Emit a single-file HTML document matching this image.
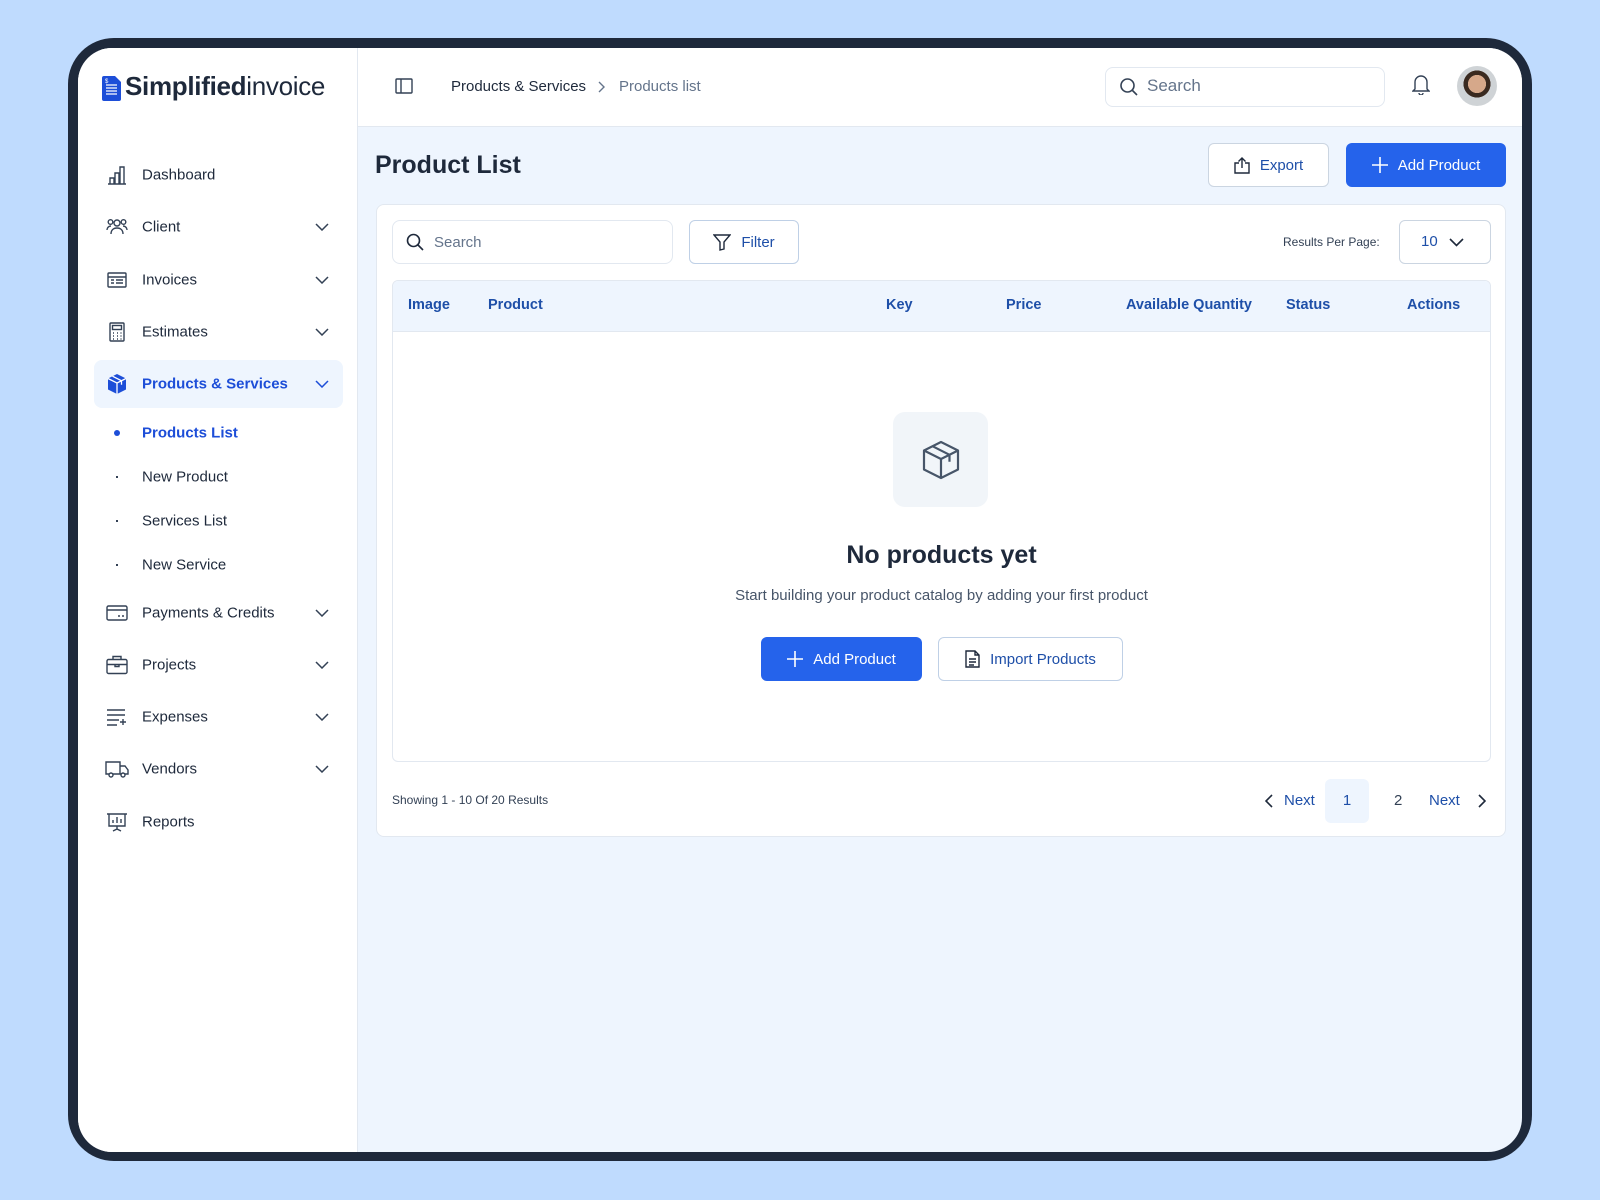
<!DOCTYPE html>
<html><head><meta charset="utf-8"><style>
*{box-sizing:border-box;margin:0;padding:0}
body{width:1600px;height:1200px;background:#bfdbfe;font-family:"Liberation Sans",sans-serif;position:relative;overflow:hidden;color:#1e293b}
.a{position:absolute}
.frame{left:68px;top:38px;width:1464px;height:1123px;background:#1e293b;border-radius:46px}
.inner{left:78px;top:48px;width:1444px;height:1104px;background:#eef5fe;border-radius:34px;overflow:hidden}
.side{left:0;top:0;width:280px;height:1104px;background:#fff;border-right:1px solid #e2e8f0}
.hdr{left:280px;top:0;width:1164px;height:79px;background:#fff;border-bottom:1px solid #e2e8f0}
.nav{position:absolute;left:64px;font-size:15px;color:#1e293b;transform:translateY(-50%)}
.ic{position:absolute;transform:translate(-50%,-50%)}
.chev{position:absolute;left:244px;transform:translate(-50%,-50%)}
.btn{position:absolute;border-radius:6px;display:flex;align-items:center;justify-content:center;gap:10px;font-size:15px}
.th{position:absolute;top:24px;font-size:14.5px;font-weight:bold;color:#1e4fa8;transform:translateY(-50%)}
</style></head><body>
<div class="a frame"></div>
<div class="a inner">
 <div class="a side">
  <svg class="a" style="left:24px;top:28px" width="19" height="25" viewBox="0 0 19 25"><path d="M2 0h11l6 6v17a2 2 0 0 1-2 2H2a2 2 0 0 1-2-2V2a2 2 0 0 1 2-2z" fill="#1d4ed8"/><path d="M4 9h11M4 12h11M4 15h11M4 18h11" stroke="#fff" stroke-width="1.3"/><text x="3" y="7" font-size="6" fill="#fff" font-family="Liberation Sans">$</text></svg>
  <div class="a" style="left:47px;top:23px;font-size:26px;color:#1e293b;letter-spacing:-0.3px"><b>Simplified</b>invoice</div>

  <svg class="ic" style="left:39px;top:127px" width="20" height="20" viewBox="0 0 20 20" fill="none" stroke="#334155" stroke-width="1.4"><path d="M1 19h18M3 19v-6h4v6M8 19V8h4v11M13 19V2h4v17"/></svg>
  <div class="nav" style="top:127px">Dashboard</div>

  <svg class="ic" style="left:39px;top:179px" width="22" height="20" viewBox="0 0 22 20" fill="none" stroke="#334155" stroke-width="1.4"><circle cx="11" cy="6" r="3"/><circle cx="4.5" cy="5" r="2.3"/><circle cx="17.5" cy="5" r="2.3"/><path d="M5 17c0-4 2.5-6 6-6s6 2 6 6M1 13c0-2 1.5-4 4-4M21 13c0-2-1.5-4-4-4"/></svg>
  <div class="nav" style="top:179px">Client</div>
  <svg class="chev" style="top:179px" width="14" height="8" viewBox="0 0 14 8" fill="none" stroke="#334155" stroke-width="1.5"><path d="M1 1l6 6 6-6"/></svg>

  <svg class="ic" style="left:39px;top:232px" width="20" height="16" viewBox="0 0 20 16" fill="none" stroke="#334155" stroke-width="1.4"><rect x="1" y="1" width="18" height="14" rx="1"/><path d="M1 5h18M4 8h3M9 8h7M4 11h3M9 11h7"/></svg>
  <div class="nav" style="top:232px">Invoices</div>
  <svg class="chev" style="top:232px" width="14" height="8" viewBox="0 0 14 8" fill="none" stroke="#334155" stroke-width="1.5"><path d="M1 1l6 6 6-6"/></svg>

  <svg class="ic" style="left:39px;top:284px" width="16" height="20" viewBox="0 0 16 20" fill="none" stroke="#334155" stroke-width="1.4"><rect x="1" y="1" width="14" height="18" rx="1"/><rect x="3.5" y="3.5" width="9" height="4"/><path d="M4 11h1M8 11h1M11.5 11h1M4 14h1M8 14h1M11.5 14h1M4 17h1M8 17h1M11.5 17h1"/></svg>
  <div class="nav" style="top:284px">Estimates</div>
  <svg class="chev" style="top:284px" width="14" height="8" viewBox="0 0 14 8" fill="none" stroke="#334155" stroke-width="1.5"><path d="M1 1l6 6 6-6"/></svg>

  <div class="a" style="left:16px;top:312px;width:249px;height:48px;background:#eef5fe;border-radius:8px"></div>
  <svg class="ic" style="left:39px;top:336px" width="22" height="22" viewBox="0 0 22 22"><path d="M11 1l9 4.5v11L11 21 2 16.5v-11z" fill="#1d4ed8"/><path d="M2 5.5L11 10l9-4.5M11 10v11M6.5 3.2l9 4.6v4" stroke="#fff" stroke-width="1.3" fill="none"/></svg>
  <div class="nav" style="top:336px;color:#1d4ed8;font-weight:bold">Products &amp; Services</div>
  <svg class="chev" style="top:336px" width="14" height="8" viewBox="0 0 14 8" fill="none" stroke="#1d4ed8" stroke-width="1.5"><path d="M1 1l6 6 6-6"/></svg>

  <div class="a" style="left:36px;top:382px;width:6px;height:6px;border-radius:50%;background:#1d4ed8"></div>
  <div class="nav" style="top:385px;color:#1d4ed8;font-weight:bold">Products List</div>
  <div class="a" style="left:38px;top:428px;width:2px;height:2px;background:#334155"></div>
  <div class="nav" style="top:429px">New Product</div>
  <div class="a" style="left:38px;top:472px;width:2px;height:2px;background:#334155"></div>
  <div class="nav" style="top:473px">Services List</div>
  <div class="a" style="left:38px;top:516px;width:2px;height:2px;background:#334155"></div>
  <div class="nav" style="top:517px">New Service</div>

  <svg class="ic" style="left:39px;top:565px" width="22" height="16" viewBox="0 0 22 16" fill="none" stroke="#334155" stroke-width="1.4"><rect x="1" y="1" width="20" height="14" rx="1.5"/><path d="M1 5h20M12 11h2M16 11h2"/></svg>
  <div class="nav" style="top:565px">Payments &amp; Credits</div>
  <svg class="chev" style="top:565px" width="14" height="8" viewBox="0 0 14 8" fill="none" stroke="#334155" stroke-width="1.5"><path d="M1 1l6 6 6-6"/></svg>

  <svg class="ic" style="left:39px;top:617px" width="22" height="19" viewBox="0 0 22 19" fill="none" stroke="#334155" stroke-width="1.4"><rect x="1" y="4" width="20" height="14" rx="1.5"/><path d="M7 4V1h8v3M1 9h20M9 9v2h4V9"/></svg>
  <div class="nav" style="top:617px">Projects</div>
  <svg class="chev" style="top:617px" width="14" height="8" viewBox="0 0 14 8" fill="none" stroke="#334155" stroke-width="1.5"><path d="M1 1l6 6 6-6"/></svg>

  <svg class="ic" style="left:39px;top:669px" width="22" height="18" viewBox="0 0 22 18" fill="none" stroke="#334155" stroke-width="1.4"><path d="M1 2h18M1 7h18M1 12h12M1 17h10M17 11v6M14 14h6"/></svg>
  <div class="nav" style="top:669px">Expenses</div>
  <svg class="chev" style="top:669px" width="14" height="8" viewBox="0 0 14 8" fill="none" stroke="#334155" stroke-width="1.5"><path d="M1 1l6 6 6-6"/></svg>

  <svg class="ic" style="left:39px;top:721px" width="24" height="18" viewBox="0 0 24 18" fill="none" stroke="#334155" stroke-width="1.4"><path d="M1 2h14v12H1zM15 6h5l3 4v4h-8"/><circle cx="6" cy="15" r="2" fill="#fff"/><circle cx="18" cy="15" r="2" fill="#fff"/></svg>
  <div class="nav" style="top:721px">Vendors</div>
  <svg class="chev" style="top:721px" width="14" height="8" viewBox="0 0 14 8" fill="none" stroke="#334155" stroke-width="1.5"><path d="M1 1l6 6 6-6"/></svg>

  <svg class="ic" style="left:39px;top:774px" width="22" height="20" viewBox="0 0 22 20" fill="none" stroke="#334155" stroke-width="1.4"><path d="M1 2h20M3 2v12h16V2M11 14v3M7 19l4-2 4 2M7 11V8M11 11V5M15 11V7"/></svg>
  <div class="nav" style="top:774px">Reports</div>
 </div>

 <div class="a hdr">
  <svg class="a" style="left:37px;top:30px" width="18" height="16" viewBox="0 0 18 16" fill="none" stroke="#334155" stroke-width="1.4"><rect x="1" y="1" width="16" height="14" rx="1"/><path d="M6 1v14"/></svg>
  <div class="a" style="left:93px;top:30px;font-size:15px;color:#1e293b">Products &amp; Services</div>
  <svg class="a" style="left:240px;top:33px" width="7" height="12" viewBox="0 0 7 12" fill="none" stroke="#64748b" stroke-width="1.4"><path d="M1 1l5 5-5 5"/></svg>
  <div class="a" style="left:261px;top:30px;font-size:15px;color:#64748b">Products list</div>
  <div class="a" style="left:747px;top:19px;width:280px;height:40px;border:1px solid #e2e8f0;border-radius:8px"></div>
  <svg class="a" style="left:761px;top:29px" width="20" height="20" viewBox="0 0 20 20" fill="none" stroke="#334155" stroke-width="1.6"><circle cx="8.5" cy="8.5" r="6.5"/><path d="M13.5 13.5L18 18"/></svg>
  <div class="a" style="left:789px;top:28px;font-size:17px;color:#64748b">Search</div>
  <svg class="a" style="left:1054px;top:26px" width="18" height="21" viewBox="0 0 18 21" fill="none" stroke="#334155" stroke-width="1.4"><path d="M3 15V8a6 6 0 0 1 12 0v7l2 2H1zM7 19a2 2 0 0 0 4 0"/></svg>
  <div class="a" style="left:1099px;top:18px;width:40px;height:40px;border-radius:50%;background:radial-gradient(circle at 50% 45%,#d6a88a 0 30%,#3a2a20 31% 45%,#cfd3d6 46%)"></div>
 </div>

 <div class="a" style="left:297px;top:103px;font-size:25px;font-weight:bold;color:#1e293b">Product List</div>
 <div class="btn" style="left:1130px;top:95px;width:121px;height:44px;background:#fff;border:1px solid #cbd5e1;color:#1e4fa8">
  <svg width="16" height="17" viewBox="0 0 16 17" fill="none" stroke="#1e293b" stroke-width="1.4"><path d="M5 6H1v10h14V6h-4M8 11V1M4.5 4.5L8 1l3.5 3.5"/></svg>Export</div>
 <div class="btn" style="left:1268px;top:95px;width:160px;height:44px;background:#2563eb;color:#fff">
  <svg width="16" height="16" viewBox="0 0 16 16" stroke="#fff" stroke-width="1.6"><path d="M8 0v16M0 8h16"/></svg>Add Product</div>

 <div class="a" style="left:298px;top:156px;width:1130px;height:633px;background:#fff;border:1px solid #e2e8f0;border-radius:8px">
  <div class="a" style="left:15px;top:15px;width:281px;height:44px;border:1px solid #e2e8f0;border-radius:8px"></div>
  <svg class="a" style="left:29px;top:28px" width="18" height="18" viewBox="0 0 18 18" fill="none" stroke="#1e293b" stroke-width="1.6"><circle cx="7.5" cy="7.5" r="6"/><path d="M12 12l5 5"/></svg>
  <div class="a" style="left:57px;top:29px;font-size:15px;color:#64748b">Search</div>
  <div class="btn" style="left:312px;top:15px;width:110px;height:44px;border:1px solid #bfd0e6;color:#1e4fa8">
   <svg width="18" height="17" viewBox="0 0 18 17" fill="none" stroke="#1e293b" stroke-width="1.4"><path d="M1 1h16l-6 7v7l-4 1V8z"/></svg>Filter</div>
  <div class="a" style="left:906px;top:30px;font-size:12px;color:#334155">Results Per Page:</div>
  <div class="a" style="left:1022px;top:15px;width:92px;height:44px;border:1px solid #cbd5e1;border-radius:6px"></div>
  <div class="a" style="left:1044px;top:28px;font-size:15px;color:#1e4fa8">10</div>
  <svg class="a" style="left:1072px;top:33px" width="15" height="9" viewBox="0 0 15 9" fill="none" stroke="#1e293b" stroke-width="1.6"><path d="M1 1l6.5 6.5L14 1"/></svg>

  <div class="a" style="left:15px;top:75px;width:1099px;height:482px;border:1px solid #e2e8f0;border-radius:6px;overflow:hidden">
   <div class="a" style="left:0;top:0;width:1099px;height:51px;background:#eef5fe;border-bottom:1px solid #e2e8f0">
    <div class="th" style="left:15px">Image</div>
    <div class="th" style="left:95px">Product</div>
    <div class="th" style="left:493px">Key</div>
    <div class="th" style="left:613px">Price</div>
    <div class="th" style="left:733px">Available Quantity</div>
    <div class="th" style="left:893px">Status</div>
    <div class="th" style="left:1014px">Actions</div>
   </div>
   <div class="a" style="left:500px;top:131px;width:95px;height:95px;background:#f1f5f9;border-radius:12px"></div>
   <svg class="a" style="left:527px;top:158px" width="42" height="42" viewBox="0 0 42 42" fill="none" stroke="#475569" stroke-width="2.2" stroke-linejoin="round"><path d="M21 3l17 8.5v19L21 39 4 30.5v-19z"/><path d="M4 11.5L21 20l17-8.5M21 20v19M12.5 7.2l17 8.6v7"/></svg>
   <div class="a" style="left:0;top:260px;width:1097px;text-align:center;font-size:25px;font-weight:bold;color:#1e293b">No products yet</div>
   <div class="a" style="left:0;top:306px;width:1097px;text-align:center;font-size:15px;color:#475569">Start building your product catalog by adding your first product</div>
   <div class="btn" style="left:368px;top:356px;width:161px;height:44px;background:#2563eb;color:#fff">
    <svg width="16" height="16" viewBox="0 0 16 16" stroke="#fff" stroke-width="1.6"><path d="M8 0v16M0 8h16"/></svg>Add Product</div>
   <div class="btn" style="left:545px;top:356px;width:185px;height:44px;border:1px solid #bfd0e6;color:#1e4fa8">
    <svg width="15" height="18" viewBox="0 0 15 18" fill="none" stroke="#1e293b" stroke-width="1.4"><path d="M1 1h9l4 4v12H1zM10 1v4h4M4 9h7M4 12h7M4 15h5"/></svg>Import Products</div>
  </div>

  <div class="a" style="left:15px;top:588px;font-size:12px;color:#334155">Showing 1 - 10 Of 20 Results</div>
  <svg class="a" style="left:888px;top:589px" width="8" height="14" viewBox="0 0 8 14" fill="none" stroke="#1e293b" stroke-width="1.6"><path d="M7 1L1 7l6 6"/></svg>
  <div class="a" style="left:907px;top:587px;font-size:15px;color:#1e4fa8">Next</div>
  <div class="a" style="left:948px;top:574px;width:44px;height:44px;background:#eef5fe;border-radius:6px;text-align:center;line-height:44px;font-size:15px;color:#1e4fa8">1</div>
  <div class="a" style="left:1017px;top:587px;font-size:15px;color:#334155">2</div>
  <div class="a" style="left:1052px;top:587px;font-size:15px;color:#1e4fa8">Next</div>
  <svg class="a" style="left:1101px;top:589px" width="8" height="14" viewBox="0 0 8 14" fill="none" stroke="#1e293b" stroke-width="1.6"><path d="M1 1l6 6-6 6"/></svg>
 </div>
</div>
</body></html>
